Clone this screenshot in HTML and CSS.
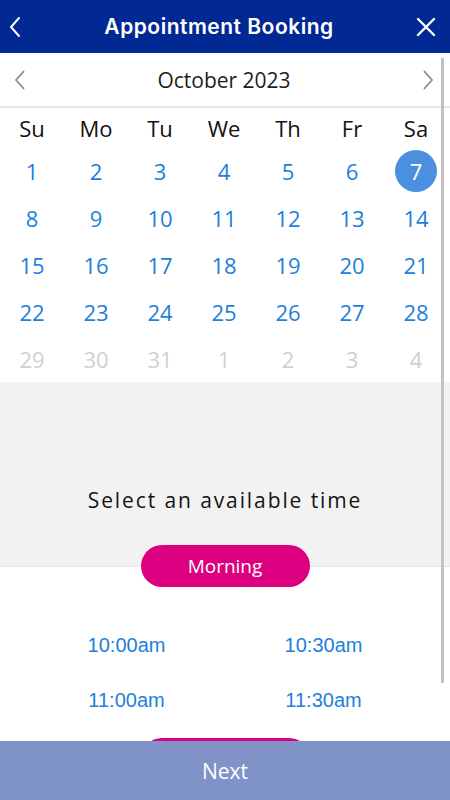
FILE: index.html
```html
<!DOCTYPE html>
<html lang="en">
<head>
    <meta charset="UTF-8">
    <meta name="viewport" content="width=device-width, initial-scale=1.0">
    <title>Appointment Booking</title>
    <link rel="stylesheet" href="styles.css">
</head>
<body>
    <header class="topbar">
        <button class="icon-btn" aria-label="Back">
            <svg width="14" height="22" viewBox="0 0 14 22"><path d="M11 2 L3 11 L11 20" fill="none" stroke="#fff" stroke-width="2" stroke-linecap="round" stroke-linejoin="round"/></svg>
        </button>
        <h1>Appointment Booking</h1>
        <button class="icon-btn" aria-label="Close">
            <svg width="20" height="20" viewBox="0 0 20 20"><path d="M2 2 L18 18 M18 2 L2 18" fill="none" stroke="#fff" stroke-width="2.4" stroke-linecap="round"/></svg>
        </button>
    </header>

    <main class="content">
        <div class="month-bar">
            <svg width="12" height="20" viewBox="0 0 12 20"><path d="M10 1 L2 10 L10 19" fill="none" stroke="#7c878d" stroke-width="1.6"/></svg>
            <span class="month-title">October 2023</span>
            <svg width="12" height="20" viewBox="0 0 12 20"><path d="M2 1 L10 10 L2 19" fill="none" stroke="#7c878d" stroke-width="1.6"/></svg>
        </div>

        <div class="calendar">
            <span class="weekday">Su</span><span class="weekday">Mo</span><span class="weekday">Tu</span><span class="weekday">We</span><span class="weekday">Th</span><span class="weekday">Fr</span><span class="weekday">Sa</span>
            <span class="day">1</span><span class="day">2</span><span class="day">3</span><span class="day">4</span><span class="day">5</span><span class="day">6</span><span class="day"><b class="selected">7</b></span>
            <span class="day">8</span><span class="day">9</span><span class="day">10</span><span class="day">11</span><span class="day">12</span><span class="day">13</span><span class="day">14</span>
            <span class="day">15</span><span class="day">16</span><span class="day">17</span><span class="day">18</span><span class="day">19</span><span class="day">20</span><span class="day">21</span>
            <span class="day">22</span><span class="day">23</span><span class="day">24</span><span class="day">25</span><span class="day">26</span><span class="day">27</span><span class="day">28</span>
            <span class="day muted">29</span><span class="day muted">30</span><span class="day muted">31</span><span class="day muted">1</span><span class="day muted">2</span><span class="day muted">3</span><span class="day muted">4</span>
        </div>

        <section class="time-intro">
            <p>Select an available time</p>
        </section>

        <div class="period"><span class="pill">Morning</span></div>

        <div class="slots">
            <a href="#" class="slot">10:00am</a>
            <a href="#" class="slot">10:30am</a>
            <a href="#" class="slot">11:00am</a>
            <a href="#" class="slot">11:30am</a>
        </div>

        <!-- afternoon pill, scrolled under the footer -->
        <div class="period next-period"><span class="pill" aria-label="Afternoon"></span></div>

        <div class="scrollbar"></div>
    </main>

    <footer class="next-bar">Next</footer>
</body>
</html>
```

FILE: styles.css
```css
body {
    margin: 0;
    width: 450px;
    height: 800px;
    display: flex;
    flex-direction: column;
    overflow: hidden;
    font-family: "Open Sans", "Noto Sans", sans-serif;
    background: #ffffff;
}
.topbar {
    height: 53px;
    flex: none;
    background: #022993;
    display: flex;
    align-items: center;
    justify-content: space-between;
    padding: 0 14px 0 8px;
    box-sizing: border-box;
}
.topbar h1 {
    margin: 0;
    color: #ffffff;
    font-family: "Inter", "Noto Sans", sans-serif;
    font-weight: 600;
    font-size: 21px;
    letter-spacing: 0.5px;
}
.icon-btn {
    background: none;
    border: none;
    padding: 0;
    display: flex;
    cursor: pointer;
}
.content {
    flex: 1;
    position: relative;
    overflow: hidden;
}
.month-bar {
    height: 53px;
    border-bottom: 2px solid #e6e9ec;
    display: flex;
    align-items: center;
    justify-content: space-between;
    padding: 0 16px 0 14px;
}
.month-title {
    font-size: 21px;
    color: #1d1d1d;
}
.calendar {
    display: grid;
    grid-template-columns: repeat(7, 1fr);
    grid-template-rows: 39px repeat(5, 47px);
    padding-right: 2px;
}
.weekday, .day {
    display: flex;
    align-items: center;
    justify-content: center;
    font-size: 22px;
}
.weekday {
    color: #111111;
}
.day {
    color: #1e7fdb;
}
.day.muted {
    color: #cbd2d5;
}
.selected {
    width: 42px;
    height: 42px;
    border-radius: 50%;
    background: #4a8fe0;
    color: #ffffff;
    font-weight: normal;
    display: flex;
    align-items: center;
    justify-content: center;
}
.time-intro {
    height: 184px;
    background: #f2f2f2;
    border-bottom: 1px solid #e3e8eb;
}
.time-intro p {
    margin: 0;
    padding-top: 104px;
    line-height: 28px;
    text-align: center;
    font-size: 21px;
    letter-spacing: 1.9px;
    color: #141414;
}
.period {
    text-align: center;
    margin-top: -22px;
}
.pill {
    display: inline-block;
    vertical-align: top;
    width: 169px;
    height: 42px;
    line-height: 42px;
    border-radius: 21px;
    background: #dc0080;
    color: #ffffff;
    font-size: 19px;
}
.slots {
    display: grid;
    grid-template-columns: 1fr 1fr;
    grid-auto-rows: 55px;
    padding: 0 28px;
    margin-top: 31px;
}
.slot {
    display: flex;
    align-items: center;
    justify-content: center;
    font-family: "Liberation Sans", Arial, sans-serif;
    font-size: 20px;
    color: #1e7fdb;
    text-decoration: none;
}
.next-period {
    margin-top: 10px;
}
.scrollbar {
    position: absolute;
    top: 5px;
    right: 6px;
    width: 3px;
    height: 625px;
    background: #c2c2c2;
}
.next-bar {
    height: 59px;
    flex: none;
    background: #8093c8;
    color: #ffffff;
    font-size: 21px;
    display: flex;
    align-items: center;
    justify-content: center;
}
```
